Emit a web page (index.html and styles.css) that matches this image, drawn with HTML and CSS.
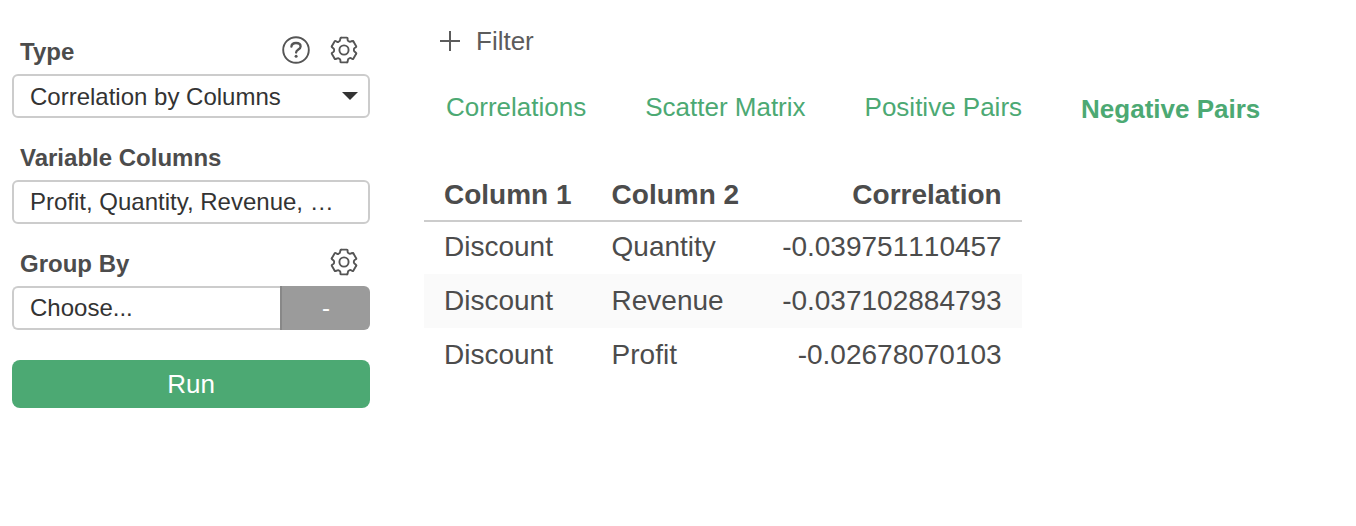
FILE: index.html
```html
<!DOCTYPE html>
<html lang="en">
<head>
<meta charset="utf-8">
<meta name="viewport" content="width=device-width, initial-scale=1">
<title>Correlation by Columns</title>
<link rel="stylesheet" href="styles.css">
</head>
<body>
<svg class="defs" aria-hidden="true">
  <path id="tooth" d="M-2.9-12.4H2.9Q3.6-12.4 3.6-11.7V-10.2Q3.7-9.2 4.6-8.8Q5.5-7.9 6.5-8.3L8.3-9Q9-9.3 9.3-8.7"/>
  <symbol id="gear" viewBox="-14 -14 28 28">
    <use href="#tooth"/>
    <use href="#tooth" transform="rotate(60)"/>
    <use href="#tooth" transform="rotate(120)"/>
    <use href="#tooth" transform="rotate(180)"/>
    <use href="#tooth" transform="rotate(240)"/>
    <use href="#tooth" transform="rotate(300)"/>
    <circle r="4.6"/>
  </symbol>
</svg>
<div class="layout">
  <form class="sidebar">
    <div class="field">
      <div class="field-head">
        <label class="label" for="type">Type</label>
        <div class="actions">
          <button class="icon-button" type="button" aria-label="Help">
            <svg class="icon" viewBox="0 0 28 28"><circle cx="14" cy="14" r="12.8"/><path class="thick" d="M9.4 10.6C9.6 8.2 11.4 7 14 7S18.6 8.3 18.6 10.5C18.6 13.6 14.1 13.5 14.1 16.6"/><path class="dot" d="M14.1 20.2v.1"/></svg>
          </button>
          <button class="icon-button" type="button" aria-label="Type settings"><svg class="icon"><use href="#gear"/></svg></button>
        </div>
      </div>
      <div class="select-wrap">
        <select class="control" id="type"><option>Correlation by Columns</option></select>
        <svg class="caret" viewBox="0 0 16 8" aria-hidden="true"><path d="M0 0H16L8 8Z"/></svg>
      </div>
    </div>
    <div class="field">
      <div class="field-head"><label class="label" for="variables">Variable Columns</label></div>
      <button class="control" id="variables" type="button">Profit, Quantity, Revenue, …</button>
    </div>
    <div class="field">
      <div class="field-head">
        <label class="label" for="group">Group By</label>
        <div class="actions">
          <button class="icon-button" type="button" aria-label="Group settings"><svg class="icon"><use href="#gear"/></svg></button>
        </div>
      </div>
      <div class="group">
        <button class="control group-main" id="group" type="button">Choose...</button>
        <button class="group-side" type="button">-</button>
      </div>
    </div>
    <button class="run" type="submit">Run</button>
  </form>
  <main class="content">
    <button class="filter" type="button">
      <svg class="plus" viewBox="0 0 20 20" aria-hidden="true"><path d="M10 0V20M0 10H20"/></svg>
      Filter
    </button>
    <nav class="tabs">
      <a class="tab" href="#correlations">Correlations</a>
      <a class="tab" href="#scatter">Scatter Matrix</a>
      <a class="tab" href="#positive">Positive Pairs</a>
      <a class="tab tab-active" href="#negative" aria-current="page">Negative Pairs</a>
    </nav>
    <table class="pairs">
      <thead>
        <tr><th>Column 1</th><th>Column 2</th><th class="number">Correlation</th></tr>
      </thead>
      <tbody>
        <tr><td>Discount</td><td>Quantity</td><td class="number">-0.039751110457</td></tr>
        <tr><td>Discount</td><td>Revenue</td><td class="number">-0.037102884793</td></tr>
        <tr><td>Discount</td><td>Profit</td><td class="number">-0.02678070103</td></tr>
      </tbody>
    </table>
  </main>
</div>
</body>
</html>
```
FILE: styles.css
```css
* {
  box-sizing: border-box;
}

body {
  margin: 0;
  background: #fff;
  color: #4c4c4c;
  font-family: "Liberation Sans", Arial, sans-serif;
}

button,
select {
  margin: 0;
  padding: 0;
  border: 0;
  background: none;
  color: inherit;
  font: inherit;
  cursor: pointer;
}

.defs {
  position: absolute;
  width: 0;
  height: 0;
}

.layout {
  display: grid;
  grid-template-columns: 358px minmax(0, 1fr);
  gap: 54px;
  padding: 25px 12px;
}

.sidebar {
  display: flex;
  flex-direction: column;
}

.field {
  margin-bottom: 12px;
}

.field-head {
  display: flex;
  align-items: flex-end;
  justify-content: space-between;
  height: 50px;
  padding: 0 12px 8px 8px;
}

.field:first-child .field-head {
  height: 49px;
}

.label {
  font-size: 24px;
  font-weight: bold;
  line-height: 28px;
}

.actions {
  display: flex;
  gap: 20px;
  padding-bottom: 2px;
}

.icon-button {
  display: flex;
}

.icon {
  width: 28px;
  height: 28px;
  fill: none;
  stroke: #555;
  stroke-width: 1.9;
  stroke-linejoin: round;
  stroke-linecap: round;
}

.thick {
  stroke-width: 2.3;
}

.dot {
  stroke-width: 3;
}

.select-wrap {
  position: relative;
}

.control {
  display: block;
  width: 100%;
  height: 44px;
  padding: 0 16px;
  border: 2px solid #ccc;
  border-radius: 6px;
  background: #fff;
  color: #333;
  font-size: 24px;
  text-align: left;
  appearance: none;
}

.caret {
  position: absolute;
  top: 18px;
  right: 12px;
  width: 16px;
  height: 8px;
  fill: #333;
  pointer-events: none;
}

.group {
  display: flex;
}

.group-main {
  flex: 1;
  border-right: 0;
  border-radius: 6px 0 0 6px;
}

.group-side {
  width: 90px;
  border-left: 2px solid #888;
  border-radius: 0 6px 6px 0;
  background: #9b9b9b;
  color: #fff;
  font-size: 24px;
}

.run {
  height: 48px;
  margin-top: 18px;
  border-radius: 8px;
  background: #4ca973;
  color: #fff;
  font-size: 26px;
}

.filter {
  display: flex;
  align-items: center;
  gap: 16px;
  margin-left: 16px;
  color: #5c5c5c;
  font-size: 26px;
  line-height: 32px;
}

.plus {
  width: 20px;
  height: 20px;
  fill: none;
  stroke: #5c5c5c;
  stroke-width: 2;
}

.tabs {
  display: flex;
  flex-wrap: wrap;
  gap: 59px;
  margin-top: 34px;
  padding-left: 22px;
}

.tab {
  color: #4ca973;
  font-size: 26px;
  line-height: 32px;
  text-decoration: none;
}

.tab-active {
  padding-top: 2px;
  font-weight: bold;
}

.pairs {
  margin-top: 45px;
  border-collapse: collapse;
  font-size: 28px;
  line-height: 32px;
}

.pairs th,
.pairs td {
  padding: 11px 20px;
  text-align: left;
}

.pairs th {
  padding: 9px 20px;
  border-bottom: 2px solid #ccc;
}

.pairs tbody tr:first-child td {
  padding-top: 9px;
}

.pairs .number {
  padding-left: 23px;
  font-kerning: none;
  text-align: right;
}

.pairs tbody tr:nth-child(even) {
  background: #fafafa;
}
```
